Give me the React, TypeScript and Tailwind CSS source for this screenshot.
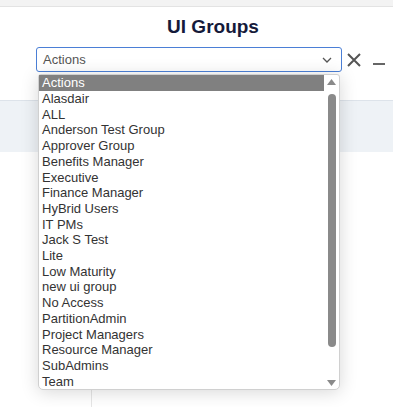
const groups = [
  "Actions",
  "Alasdair",
  "ALL",
  "Anderson Test Group",
  "Approver Group",
  "Benefits Manager",
  "Executive",
  "Finance Manager",
  "HyBrid Users",
  "IT PMs",
  "Jack S Test",
  "Lite",
  "Low Maturity",
  "new ui group",
  "No Access",
  "PartitionAdmin",
  "Project Managers",
  "Resource Manager",
  "SubAdmins",
  "Team",
];

export default function App() {
  return (
    <div className="relative w-[393px] h-[407px] overflow-hidden bg-white font-['Liberation_Sans',Arial,sans-serif]">
      {/* top strip */}
      <div className="h-[7px] bg-[#f3f3f3] border-b border-[#e3e3e3]" />

      {/* header */}
      <div className="ml-[36px] w-[354px] flex flex-col">
        <h1 className="h-[39px] pt-[9px] text-center text-[19px] leading-[22px] font-bold text-[#151a3a]">
          UI Groups
        </h1>
        <div className="flex items-center h-[25px] mt-[1px]">
          <div className="w-[306px] h-[25px] flex items-center justify-between border border-[#4b7fd6] rounded-[3px] bg-white pl-[6px] pr-[9px]">
            <span className="text-[13px] text-[#555]">Actions</span>
            <svg width="10" height="6" viewBox="0 0 10 6">
              <path d="M1 1 L5 5 L9 1" fill="none" stroke="#555" strokeWidth="1.3" />
            </svg>
          </div>
          <svg className="ml-[5px]" width="14" height="14" viewBox="0 0 14 14">
            <path d="M1 1 L13 13 M13 1 L1 13" stroke="#555" strokeWidth="2" />
          </svg>
          <div className="ml-[12px] mt-[8px] w-[12px] h-[2px] bg-[#666]" />
        </div>
      </div>

      {/* background band */}
      <div className="mt-[28px] h-[52px] bg-[#eef2f6] border-t border-[#dde3ea]" />
      <div className="h-[255px] flex">
        <div className="w-[92px] border-r border-[#e6e6e6] mt-[230px]" />
      </div>

      {/* open dropdown list */}
      <div className="absolute left-[38px] top-[74px] w-[302px] h-[316px] flex bg-white rounded-b-[5px] rounded-t-[3px] border border-[#d0d0d0] shadow-[0_2px_18px_rgba(0,0,0,0.16)]">
        <div className="flex-1 flex flex-col">
          {groups.map((g, i) => (
            <div
              key={g}
              className={
                i === 0
                  ? "h-[15.75px] pl-[3px] flex items-center text-[13px] leading-none bg-[#808080] text-white"
                  : "h-[15.75px] pl-[3px] flex items-center text-[13px] leading-none text-[#333]"
              }
            >
              {g}
            </div>
          ))}
        </div>
        <div className="w-[15px] flex flex-col items-center pt-[4px] pb-[3px]">
          <svg width="9" height="6" viewBox="0 0 9 6">
            <path d="M4.5 0 L9 6 L0 6 Z" fill="#8a8a8a" />
          </svg>
          <div className="mt-[9px] w-[8px] h-[253px] rounded-full bg-[#8a8a8a]" />
          <div className="flex-1" />
          <svg width="9" height="6" viewBox="0 0 9 6">
            <path d="M0 0 L9 0 L4.5 6 Z" fill="#8a8a8a" />
          </svg>
        </div>
      </div>
    </div>
  );
}
